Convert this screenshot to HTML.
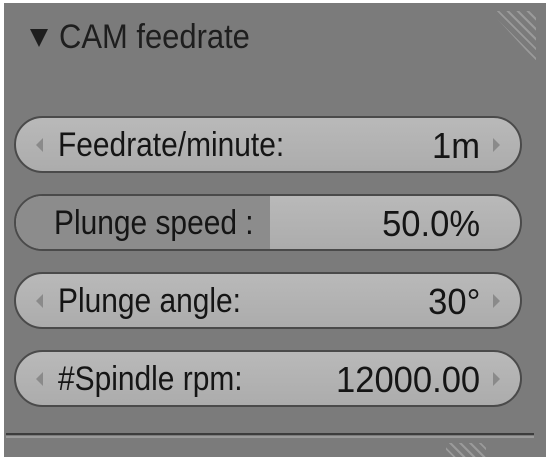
<!DOCTYPE html><html><head><style>
body{margin:0;width:551px;height:457px;background:#fff;overflow:hidden;font-family:"Liberation Sans",sans-serif;}
#p{position:absolute;left:4px;top:3px;width:542px;height:454px;background:#7b7b7b;}
.t{position:absolute;left:55px;top:15px;font-size:34px;color:#1e1e1e;transform:scaleX(0.91);transform-origin:left;}
.tri{position:absolute;left:26px;top:26px;width:0;height:0;border-left:9px solid transparent;border-right:9px solid transparent;border-top:18px solid #1e1e1e;}
.f{position:absolute;left:10px;width:508px;height:57px;border:2px solid #4a4a4a;border-radius:30px;background:linear-gradient(#b9b9b9,#acacac);box-sizing:border-box;overflow:hidden;font-size:34px;color:#151515;}
.f .l{position:absolute;left:42px;top:8px;transform:scaleX(0.88);transform-origin:left;}
.f .r{position:absolute;right:40px;top:7px;font-size:36px;transform:scaleX(0.96);transform-origin:right;}
.f .a{position:absolute;top:20px;width:0;height:0;border-top:7px solid transparent;border-bottom:7px solid transparent;}
.al{left:20px;border-right:7px solid #8a8a8a;}
.ar{right:20px;border-left:7px solid #8a8a8a;}
.sl{position:absolute;left:0;top:0;bottom:0;width:254px;background:#8c8c8c;}
.hl{position:absolute;right:10px;top:8px;width:46px;height:50px;background:repeating-linear-gradient(45deg,transparent 0 5px,#9a9a9a 5px 7px);clip-path:polygon(0 0,100% 0,100% 100%);}
</style></head><body><div id="p">
<div class="hl"></div>
<div class="tri"></div><div class="t">CAM feedrate</div>
<div class="f" style="top:113px"><div class="a al"></div><div class="l">Feedrate/minute:</div><div class="r">1m</div><div class="a ar"></div></div>
<div class="f" style="top:191px"><div class="sl"></div><div class="l" style="left:38px">Plunge speed :</div><div class="r" style="right:40px">50.0%</div></div>
<div class="f" style="top:269px"><div class="a al"></div><div class="l">Plunge angle:</div><div class="r">30°</div><div class="a ar"></div></div>
<div class="f" style="top:347px"><div class="a al"></div><div class="l">#Spindle rpm:</div><div class="r">12000.00</div><div class="a ar"></div></div>
<div style="position:absolute;left:2px;top:430px;width:528px;height:2px;background:#3c3c3c"></div>
<div style="position:absolute;left:2px;top:433px;width:528px;height:2px;background:#9a9a9a"></div>
<div style="position:absolute;right:60px;top:440px;width:40px;height:14px;background:repeating-linear-gradient(45deg,transparent 0 5px,#9a9a9a 5px 7px)"></div>
</div></body></html>
